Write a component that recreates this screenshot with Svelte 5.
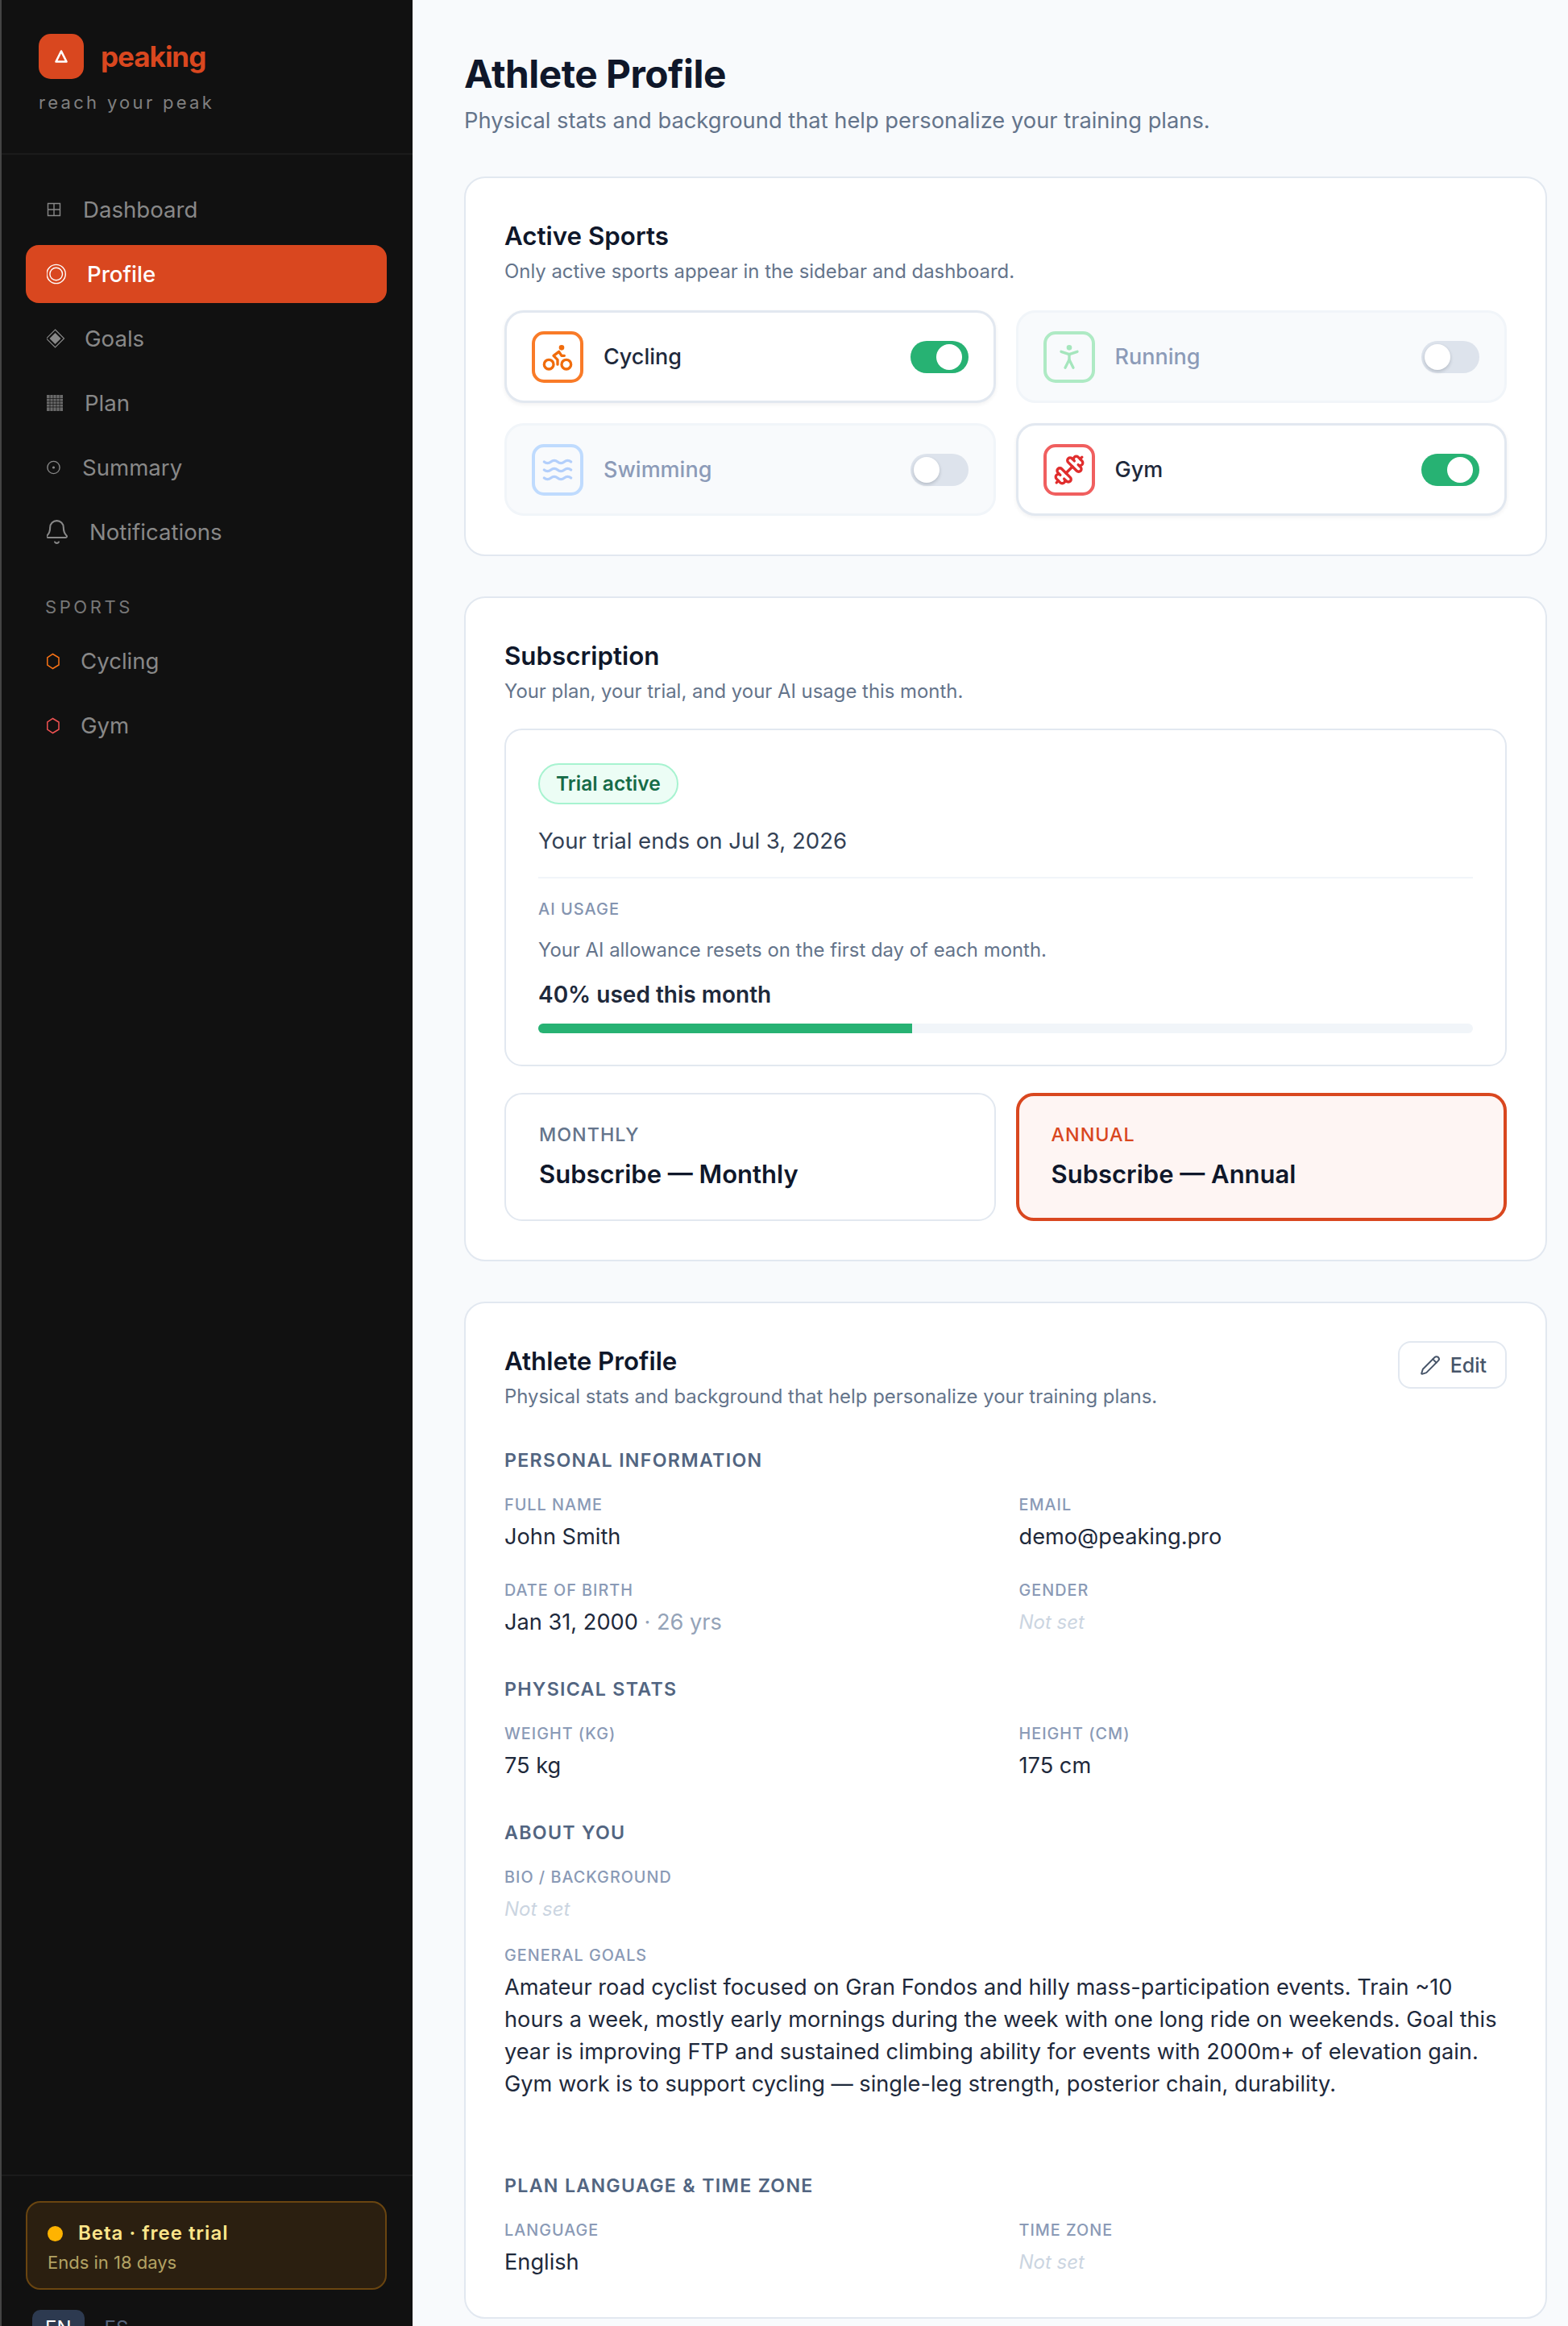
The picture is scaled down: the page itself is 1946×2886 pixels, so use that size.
<script lang="ts">
  const sports = [
    { name: 'Cycling', kind: 'cycling', on: true },
    { name: 'Running', kind: 'running', on: false },
    { name: 'Swimming', kind: 'swimming', on: false },
    { name: 'Gym', kind: 'gym', on: true },
  ];
</script>

<div class="shell">
  <aside class="sidebar">
    <div class="brand">
      <div class="logo-row">
        <div class="logo">
          <svg width="18" height="18" viewBox="0 0 18 18"><path d="M9 2.500 15.500 15.500H2.500Z" fill="none" stroke="#fff" stroke-width="2.600" stroke-linejoin="round" /></svg>
        </div>
        <span class="wordmark">peaking</span>
      </div>
      <div class="tagline">reach your peak</div>
    </div>

    <nav class="nav">
      <a class="item">
        <svg width="21" height="30" viewBox="0 0 21 30" fill="none" stroke="currentColor" stroke-width="1.400"><path d="M1.500 7.500h15v15h-15zM9 7.500v15M1.500 15h15" /></svg>
        <span>Dashboard</span>
      </a>
      <a class="item active">
        <svg width="26" height="30" viewBox="0 0 26 30" fill="none" stroke="currentColor" stroke-width="1.400"><circle cx="11.700" cy="15" r="11.600" /><circle cx="11.700" cy="15" r="7.800" /></svg>
        <span>Profile</span>
      </a>
      <a class="item">
        <svg width="23" height="30" viewBox="0 0 23 30" fill="none" stroke="currentColor" stroke-width="1.200"><path d="M10.500 4 21.500 15 10.500 26-.5 15Z" /><path d="M10.500 8 17.500 15 10.500 22 3.500 15Z" fill="currentColor" stroke="none" /></svg>
        <span>Goals</span>
      </a>
      <a class="item">
        <svg width="23" height="30" viewBox="0 0 23 30" fill="currentColor"><path d="M0 5h20v20H0z" opacity=".75" /><path d="M0 9.500h20M0 13h20M0 16.500h20M0 20h20M4 5v20M8 5v20M12 5v20M16 5v20" stroke="#111" stroke-width=".7" /></svg>
        <span>Plan</span>
      </a>
      <a class="item">
        <svg width="20" height="30" viewBox="0 0 20 30" fill="none" stroke="currentColor" stroke-width="1.400"><circle cx="8.500" cy="15" r="7.600" /><circle cx="8.500" cy="15" r="1.600" fill="currentColor" stroke="none" /></svg>
        <span>Summary</span>
      </a>
      <a class="item">
        <svg width="29" height="30" viewBox="3 1.200 20.900 21.600" fill="none" stroke="currentColor" stroke-width="1.500" stroke-linecap="round" stroke-linejoin="round"><path d="M10.268 21a2 2 0 0 0 3.464 0" /><path d="M3.262 15.326A1 1 0 0 0 4 17h16a1 1 0 0 0 .74-1.673C19.410 13.956 18 12.499 18 8A6 6 0 0 0 6 8c0 4.499-1.411 5.956-2.738 7.326" /></svg>
        <span>Notifications</span>
      </a>

      <div class="nav-label">SPORTS</div>

      <a class="item">
        <svg class="hex-orange" width="18" height="30" viewBox="0 0 18 30" fill="none" stroke="currentColor" stroke-width="1.500"><path d="M7.500 6.500 15 11v9l-7.500 4.500L.8 20v-9Z" /></svg>
        <span>Cycling</span>
      </a>
      <a class="item">
        <svg class="hex-red" width="18" height="30" viewBox="0 0 18 30" fill="none" stroke="currentColor" stroke-width="1.500"><path d="M7.500 6.500 15 11v9l-7.500 4.500L.8 20v-9Z" /></svg>
        <span>Gym</span>
      </a>
    </nav>

    <div class="side-footer">
      <div class="beta">
        <div class="beta-top"><span class="beta-dot"></span>Beta · free trial</div>
        <div class="beta-sub">Ends in 18 days</div>
      </div>
      <div class="langs">
        <span class="lang on">EN</span>
        <span class="lang">ES</span>
      </div>
    </div>
  </aside>

  <main class="main">
    <h1>Athlete Profile</h1>
    <p class="lead">Physical stats and background that help personalize your training plans.</p>

    <section class="card">
      <h2>Active Sports</h2>
      <p class="sub">Only active sports appear in the sidebar and dashboard.</p>
      <div class="sports">
        {#each sports as s}
          <div class="sport" class:off={!s.on}>
            <div class="sport-icon {s.kind}">
              <svg width="40" height="40" viewBox="0 0 24 24" fill="none" stroke="currentColor" stroke-width="2" stroke-linecap="round" stroke-linejoin="round">
                {#if s.kind === 'cycling'}
                  <circle cx="18.500" cy="17.500" r="3.500" /><circle cx="5.500" cy="17.500" r="3.500" /><circle cx="15" cy="5" r="1" /><path d="M12 17.500V14l-3-3 4-3 2 3h2" />
                {:else if s.kind === 'running'}
                  <circle cx="12" cy="5" r="1" /><path d="m9 20 3-6 3 6" /><path d="m6 8 6 2 6-2" /><path d="M12 10v4" />
                {:else if s.kind === 'swimming'}
                  <path d="M2 6c.6.5 1.200 1 2.500 1C7 7 7 5 9.500 5c2.600 0 2.400 2 5 2 2.500 0 2.500-2 5-2 1.300 0 1.900.5 2.500 1" />
                  <path d="M2 12c.6.5 1.200 1 2.500 1 2.500 0 2.500-2 5-2 2.600 0 2.400 2 5 2 2.500 0 2.500-2 5-2 1.300 0 1.900.5 2.500 1" />
                  <path d="M2 18c.6.5 1.200 1 2.500 1 2.500 0 2.500-2 5-2 2.600 0 2.400 2 5 2 2.500 0 2.500-2 5-2 1.300 0 1.900.5 2.500 1" />
                {:else}
                  <path d="M17.596 12.768a2 2 0 1 0 2.829-2.829l-1.768-1.767a2 2 0 0 0 2.828-2.829l-2.828-2.828a2 2 0 0 0-2.829 2.828l-1.767-1.768a2 2 0 1 0-2.829 2.829z" />
                  <path d="m2.500 21.500 1.400-1.400" /><path d="m20.100 3.900 1.400-1.400" />
                  <path d="M5.343 21.485a2 2 0 1 0 2.829-2.828l1.767 1.768a2 2 0 1 0 2.829-2.829l-6.364-6.364a2 2 0 1 0-2.829 2.829l1.768 1.767a2 2 0 0 0-2.828 2.829z" />
                  <path d="m9.600 14.400 4.800-4.800" />
                {/if}
              </svg>
            </div>
            <span class="sport-name">{s.name}</span>
            <span class="switch" class:on={s.on}><span class="knob"></span></span>
          </div>
        {/each}
      </div>
    </section>

    <section class="card">
      <h2>Subscription</h2>
      <p class="sub">Your plan, your trial, and your AI usage this month.</p>
      <div class="plan-box">
        <span class="pill">Trial active</span>
        <p class="trial-ends">Your trial ends on Jul 3, 2026</p>
        <hr />
        <div class="usage-label">AI USAGE</div>
        <p class="usage-note">Your AI allowance resets on the first day of each month.</p>
        <p class="usage-value">40% used this month</p>
        <div class="track"><div class="fill" style="width: 40%"></div></div>
      </div>
      <div class="buy">
        <button class="buy-btn">
          <span class="buy-label">MONTHLY</span>
          <span class="buy-title">Subscribe — Monthly</span>
        </button>
        <button class="buy-btn featured">
          <span class="buy-label">ANNUAL</span>
          <span class="buy-title">Subscribe — Annual</span>
        </button>
      </div>
    </section>

    <section class="card">
      <div class="head-row">
        <div>
          <h2>Athlete Profile</h2>
          <p class="sub">Physical stats and background that help personalize your training plans.</p>
        </div>
        <button class="edit">
          <svg width="26" height="26" viewBox="0 0 24 24" fill="none" stroke="currentColor" stroke-width="1.800" stroke-linecap="round" stroke-linejoin="round"><path d="M21.174 6.812a1 1 0 0 0-3.986-3.987L3.842 16.174a2 2 0 0 0-.5.83l-1.321 4.352a.5.5 0 0 0 .623.622l4.353-1.320a2 2 0 0 0 .83-.497z" /><path d="m15 5 4 4" /></svg>
          Edit
        </button>
      </div>

      <h3>PERSONAL INFORMATION</h3>
      <div class="fields">
        <div class="field"><div class="label">FULL NAME</div><div class="value">John Smith</div></div>
        <div class="field"><div class="label">EMAIL</div><div class="value">demo@peaking.pro</div></div>
        <div class="field"><div class="label">DATE OF BIRTH</div><div class="value">Jan 31, 2000 <span class="muted">· 26 yrs</span></div></div>
        <div class="field"><div class="label">GENDER</div><div class="value empty">Not set</div></div>
      </div>

      <h3>PHYSICAL STATS</h3>
      <div class="fields">
        <div class="field"><div class="label">WEIGHT (KG)</div><div class="value">75 kg</div></div>
        <div class="field"><div class="label">HEIGHT (CM)</div><div class="value">175 cm</div></div>
      </div>

      <h3>ABOUT YOU</h3>
      <div class="field"><div class="label">BIO / BACKGROUND</div><div class="value empty">Not set</div></div>
      <div class="field goals">
        <div class="label">GENERAL GOALS</div>
        <div class="value">Amateur road cyclist focused on Gran Fondos and hilly mass-participation events. Train ~10 hours a week, mostly early mornings during the week with one long ride on weekends. Goal this year is improving FTP and sustained climbing ability for events with 2000m+ of elevation gain. Gym work is to support cycling — single-leg strength, posterior chain, durability.</div>
      </div>

      <h3 class="after-goals">PLAN LANGUAGE &amp; TIME ZONE</h3>
      <div class="fields">
        <div class="field"><div class="label">LANGUAGE</div><div class="value">English</div></div>
        <div class="field"><div class="label">TIME ZONE</div><div class="value empty">Not set</div></div>
      </div>
    </section>
  </main>
</div>

<style>
  :global(body) {
    margin: 0;
    background: #f8fafc;
  }

  .shell {
    display: flex;
    height: 100vh;
    overflow: hidden;
    font-family: Inter, "Liberation Sans", sans-serif;
  }

  p, h1, h2, h3 {
    margin: 0;
  }

  .sidebar {
    box-sizing: border-box;
    flex: 0 0 512px;
    display: flex;
    flex-direction: column;
    height: 2911px;
    background: #111;
    border-left: 2px solid #444;
  }

  .brand {
    box-sizing: border-box;
    height: 192px;
    padding: 42px 46px 0;
    border-bottom: 2px solid #1b1b1b;
  }

  .logo-row {
    display: flex;
    align-items: center;
    gap: 21px;
  }

  .logo {
    display: flex;
    align-items: center;
    justify-content: center;
    width: 56px;
    height: 56px;
    background: #d9471f;
    border-radius: 15px;
  }

  .wordmark {
    font-size: 35px;
    font-weight: 700;
    letter-spacing: -1px;
    color: #d9471f;
  }

  .tagline {
    margin-top: 14px;
    font-size: 22px;
    line-height: 30px;
    letter-spacing: 3.300px;
    color: #808080;
  }

  .nav {
    flex: 1;
    display: flex;
    flex-direction: column;
    gap: 8px;
    padding: 32px 32px 0 30px;
  }

  .item {
    box-sizing: border-box;
    display: flex;
    align-items: center;
    gap: 24px;
    height: 72px;
    padding-left: 26px;
    border-radius: 16px;
    font-size: 27.600px;
    color: #888;
  }

  .item svg {
    flex: none;
  }

  .item.active {
    background: #d9471f;
    color: #fff;
    font-weight: 500;
  }

  .hex-orange {
    color: #f97316;
  }

  .hex-red {
    color: #f05252;
  }

  .nav-label {
    margin: 34px 0 8px 24px;
    font-size: 22px;
    line-height: 30px;
    letter-spacing: 3.600px;
    color: #777;
  }

  .side-footer {
    padding: 31px 32px 0 30px;
    border-top: 2px solid #1b1b1b;
  }

  .beta {
    box-sizing: border-box;
    height: 110px;
    padding: 22px 25px 0;
    background: #2b1f10;
    border: 2px solid #6a4510;
    border-radius: 18px;
  }

  .beta-top {
    display: flex;
    align-items: center;
    gap: 19px;
    font-size: 24px;
    line-height: 32px;
    font-weight: 600;
    letter-spacing: 1px;
    color: #fde68a;
  }

  .beta-dot {
    width: 19px;
    height: 19px;
    background: #ffb300;
    border-radius: 50%;
  }

  .beta-sub {
    margin-top: 5px;
    font-size: 22px;
    line-height: 30px;
    color: #b3a263;
  }

  .langs {
    display: flex;
    align-items: center;
    gap: 9px;
    margin: 25px 0 0 8px;
  }

  .lang {
    padding: 8px 16px;
    font-size: 24px;
    color: #55647c;
  }

  .lang.on {
    background: #2d3a50;
    border-radius: 10px;
    color: #fff;
  }

  .main {
    flex: 1;
    min-width: 0;
    padding: 62px 26px 0 64px;
  }

  h1 {
    font-size: 47.800px;
    line-height: 60px;
    font-weight: 700;
    letter-spacing: -0.5px;
    color: #0f172a;
  }

  .lead {
    margin-top: 6px;
    margin-bottom: 47px;
    font-size: 27.300px;
    line-height: 44px;
    color: #64748b;
  }

  .card {
    box-sizing: border-box;
    margin-bottom: 50px;
    padding: 48px;
    background: #fff;
    border: 2px solid #e2e8f0;
    border-radius: 26px;
  }

  h2 {
    font-size: 31.300px;
    line-height: 48px;
    font-weight: 600;
    color: #0f172a;
  }

  .sub {
    margin-top: 2px;
    margin-bottom: 28px;
    font-size: 23.900px;
    line-height: 36px;
    color: #64748b;
  }

  .sports {
    display: grid;
    grid-template-columns: 1fr 1fr;
    gap: 25px;
    margin-top: 30px;
  }

  .sport {
    box-sizing: border-box;
    display: flex;
    align-items: center;
    height: 115px;
    padding: 0 31px;
    background: #fff;
    border: 3px solid #e2e8f0;
    border-radius: 24px;
    box-shadow: 0 2px 5px rgba(15, 23, 42, 0.06);
  }

  .sport.off {
    background: #f8fafc;
    border-color: #f1f5f9;
    box-shadow: none;
  }

  .sport-icon {
    box-sizing: border-box;
    display: flex;
    align-items: center;
    justify-content: center;
    width: 64px;
    height: 64px;
    border: 4px solid;
    border-radius: 15px;
  }

  .cycling { border-color: #f97b28; color: #f06c0c; }
  .running { border-color: #aeeac4; color: #a5e6bd; }
  .swimming { border-color: #bfdbfe; color: #b3cffb; }
  .gym { border-color: #f05f5f; color: #e02d2d; }

  .sport-name {
    flex: 1;
    margin-left: 25px;
    font-size: 27px;
    font-weight: 500;
    color: #1e293b;
  }

  .off .sport-name {
    color: #8c9bb8;
  }

  .switch {
    display: block;
    flex: none;
    width: 72px;
    height: 40px;
    padding: 4px;
    box-sizing: border-box;
    background: #dde3ec;
    border-radius: 20px;
  }

  .switch.on {
    background: #27b273;
  }

  .knob {
    display: block;
    width: 32px;
    height: 32px;
    background: #fff;
    border-radius: 50%;
    box-shadow: 0 2px 4px rgba(15, 23, 42, 0.2);
  }

  .switch.on .knob {
    margin-left: 28px;
    box-shadow: none;
  }

  .plan-box {
    box-sizing: border-box;
    padding: 41px 40px 39px;
    border: 2px solid #e2e8f0;
    border-radius: 22px;
  }

  .pill {
    display: inline-block;
    box-sizing: border-box;
    height: 51px;
    padding: 0 20px;
    vertical-align: top;
    background: #ecfdf5;
    border: 2px solid #a7f3d0;
    border-radius: 26px;
    font-size: 24.500px;
    line-height: 47px;
    font-weight: 600;
    color: #166b47;
  }

  .trial-ends {
    margin-top: 25px;
    font-size: 27.600px;
    line-height: 40px;
    color: #334155;
  }

  hr {
    height: 2px;
    margin: 25px 0 26px;
    border: 0;
    background: #f1f5f9;
  }

  .usage-label {
    font-size: 20px;
    line-height: 24px;
    font-weight: 500;
    letter-spacing: 1px;
    color: #8494b0;
  }

  .usage-note {
    margin-top: 21px;
    font-size: 23.900px;
    line-height: 36px;
    color: #64748b;
  }

  .usage-value {
    margin-top: 17px;
    font-size: 28px;
    line-height: 40px;
    font-weight: 600;
    color: #1e293b;
  }

  .track {
    height: 12px;
    margin-top: 16px;
    overflow: hidden;
    background: #f1f5f9;
    border-radius: 6px;
  }

  .fill {
    height: 100%;
    background: #27b273;
  }

  .buy {
    display: grid;
    grid-template-columns: 1fr 1fr;
    gap: 25px;
    margin-top: 33px;
  }

  .buy-btn {
    box-sizing: border-box;
    display: block;
    height: 159px;
    padding: 35px 41px;
    text-align: left;
    font-family: inherit;
    background: #fff;
    border: 2px solid #e2e8f0;
    border-radius: 22px;
  }

  .buy-btn.featured {
    padding: 33px 40px;
    background: #fef5f3;
    border: 4px solid #d9471f;
  }

  .buy-label {
    display: block;
    font-size: 23.300px;
    line-height: 30px;
    font-weight: 500;
    letter-spacing: 1px;
    color: #64748b;
  }

  .featured .buy-label {
    color: #d9471f;
  }

  .buy-title {
    display: block;
    margin-top: 12px;
    font-size: 31px;
    line-height: 44px;
    font-weight: 600;
    color: #0f172a;
  }

  .head-row {
    display: flex;
    align-items: flex-start;
    justify-content: space-between;
  }

  .edit {
    display: flex;
    align-items: center;
    gap: 12px;
    box-sizing: border-box;
    height: 59px;
    margin-top: -1px;
    padding: 0 23px 0 25px;
    font-family: inherit;
    font-size: 25px;
    font-weight: 500;
    color: #475569;
    background: #fff;
    border: 2px solid #e2e8f0;
    border-radius: 16px;
  }

  h3 {
    margin: 48px 0 28px;
    font-size: 23.200px;
    line-height: 30px;
    font-weight: 600;
    letter-spacing: 1.300px;
    color: #526581;
  }

  .head-row + h3 {
    margin-top: 18px;
  }

  .fields {
    display: grid;
    grid-template-columns: 1fr 1fr;
    column-gap: 33px;
    row-gap: 34px;
  }

  .label {
    font-size: 19.800px;
    line-height: 24px;
    font-weight: 500;
    letter-spacing: 1px;
    color: #8a9ab6;
  }

  .value {
    margin-top: 8px;
    font-size: 27.200px;
    line-height: 40px;
    color: #1e293b;
  }

  .muted {
    color: #94a3b8;
  }

  .empty {
    font-size: 24px;
    font-style: italic;
    color: #cbd5e1;
  }

  .goals {
    margin-top: 25px;
  }

  .after-goals {
    margin-top: 91px;
  }
</style>
